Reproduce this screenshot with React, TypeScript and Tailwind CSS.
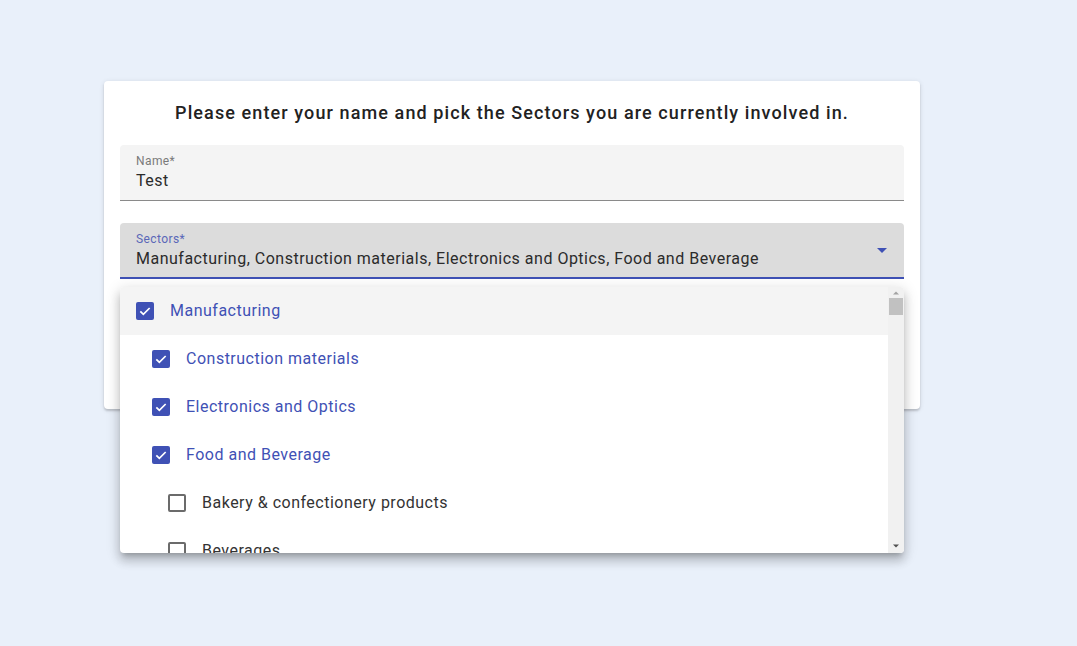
import { useState } from "react";

interface Sector {
  label: string;
  level: number;
}

const sectors: Sector[] = [
  { label: "Manufacturing", level: 0 },
  { label: "Construction materials", level: 1 },
  { label: "Electronics and Optics", level: 1 },
  { label: "Food and Beverage", level: 1 },
  { label: "Bakery & confectionery products", level: 2 },
  { label: "Beverages", level: 2 },
  { label: "Fish & fish products", level: 2 },
];

const indent = ["pl-4", "pl-8", "pl-12"];

function CheckBox({ checked }: { checked: boolean }) {
  if (checked) {
    return (
      <span className="w-[18px] h-[18px] shrink-0 rounded-[2px] bg-[#3f51b5] flex items-center justify-center">
        <svg width="16" height="16" viewBox="0 0 24 24">
          <path d="M5 12.5l4.5 4.5L19 7.5" fill="none" stroke="white" strokeWidth="2.6" />
        </svg>
      </span>
    );
  }
  return <span className="w-[18px] h-[18px] shrink-0 rounded-[2px] border-2 border-[#6b6b6b]" />;
}

export default function App() {
  const [selected, setSelected] = useState<string[]>([
    "Manufacturing",
    "Construction materials",
    "Electronics and Optics",
    "Food and Beverage",
  ]);

  const toggle = (label: string) => {
    setSelected((s) => (s.includes(label) ? s.filter((x) => x !== label) : [...s, label]));
  };

  return (
    <div className="min-h-[646px] bg-[#e9f0fa] pt-[81px] font-['Roboto',sans-serif]">
      <div className="ml-[104px] w-[816px] bg-white rounded-[4px] shadow-[0_2px_2px_rgba(0,0,0,0.14),0_1px_5px_rgba(0,0,0,0.12)] px-4 pt-[18px] pb-4">
        <h1 className="text-center text-[18px] font-medium leading-7 text-[#222] tracking-[1.1px] mb-[18px]">
          Please enter your name and pick the Sectors you are currently involved in.
        </h1>

        {/* Name */}
        <div className="bg-[#f4f4f4] rounded-t-[4px] border-b border-[#8a8a8a] px-4 pt-2 pb-[7px]">
          <div className="text-[12px] leading-4 text-[#7a7a7a] tracking-[0.4px]">Name*</div>
          <div className="text-[16px] leading-6 text-[#2b2b2b] tracking-[0.5px]">Test</div>
        </div>

        {/* Sectors */}
        <div className="relative mt-[22px]">
          <div className="bg-[#dcdcdc] rounded-t-[4px] border-b-2 border-[#3f51b5] pl-4 pr-8 pt-2 pb-[6px]">
            <div className="text-[12px] leading-4 text-[#5a67b8] tracking-[0.4px]">Sectors*</div>
            <div className="text-[16px] leading-6 text-[#2b2b2b] tracking-[0.5px] truncate">
              {selected.join(", ")}
            </div>
            <svg className="absolute right-[10px] top-[15px]" width="24" height="24" viewBox="0 0 24 24">
              <path d="M7 10l5 5 5-5z" fill="#3f51b5" />
            </svg>
          </div>

          {/* Menu */}
          <div className="absolute z-10 left-0 right-0 top-[64px] h-[266px] bg-white rounded-[4px] overflow-hidden flex shadow-[0_5px_5px_-3px_rgba(0,0,0,0.2),0_8px_10px_1px_rgba(0,0,0,0.14),0_3px_14px_2px_rgba(0,0,0,0.12)]">
            <ul className="flex-1 overflow-hidden">
              {sectors.map((s, i) => {
                const on = selected.includes(s.label);
                return (
                  <li
                    key={s.label}
                    onClick={() => toggle(s.label)}
                    className={`h-12 flex items-center gap-4 cursor-pointer ${indent[s.level]} ${i === 0 ? "bg-[#f4f4f4]" : ""}`}
                  >
                    <CheckBox checked={on} />
                    <span className={`text-[16px] tracking-[0.5px] ${on ? "text-[#3f51b5]" : "text-[#333]"}`}>
                      {s.label}
                    </span>
                  </li>
                );
              })}
            </ul>
            {/* scrollbar */}
            <div className="w-[16px] bg-[#f1f1f1] flex flex-col items-center">
              <svg className="mt-[2px]" width="16" height="7" viewBox="0 0 16 7">
                <path d="M5 5.5l3-3 3 3z" fill="#a3a3a3" />
              </svg>
              <div className="mt-[2px] w-[14px] h-[17px] bg-[#c1c1c1]" />
              <div className="flex-1" />
              <svg className="mb-[3px]" width="16" height="7" viewBox="0 0 16 7">
                <path d="M5 1.5l3 3 3-3z" fill="#505050" />
              </svg>
            </div>
          </div>
        </div>

        {/* Agree row (under the menu) */}
        <label className="flex items-center gap-3 h-[42px] mt-[18px] pl-3 text-[16px] text-[#333]">
          <CheckBox checked={false} />
          Agree to terms
        </label>

        <button className="mt-[18px] w-[768px] h-9 rounded-[4px] border border-[#3f51b5] text-[#3f51b5] text-[14px] font-medium uppercase tracking-[0.4px]">
          Save
        </button>
      </div>
    </div>
  );
}
